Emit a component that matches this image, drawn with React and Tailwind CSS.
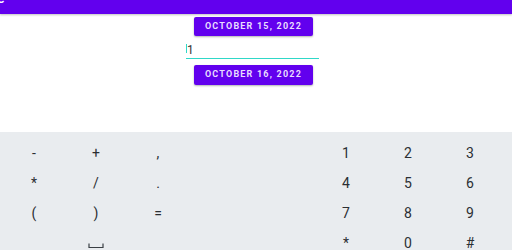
import React from "react";

const left = [["-", "+", ","], ["*", "/", "."], ["(", ")", "="], ["", "space", ""]];
const right = [["1", "2", "3"], ["4", "5", "6"], ["7", "8", "9"], ["*", "0", "#"]];

function Key({ k }) {
  if (k === "space") {
    return (
      <div className="flex h-[30px] w-[62px] items-center justify-center">
        <svg width="16" height="6" viewBox="0 0 16 6" className="mt-[6px]">
          <path d="M1 0.5 V4.5 H15 V0.5" fill="none" stroke="#3a3f44" strokeWidth="1.2" />
        </svg>
      </div>
    );
  }
  return (
    <div className="flex h-[30px] w-[62px] items-center justify-center text-[14px] text-[#2b2f33]">
      {k}
    </div>
  );
}

export default function App() {
  return (
    <div className="flex h-[250px] w-[512px] flex-col overflow-hidden bg-white" style={{ fontFamily: "Roboto, 'Noto Sans', sans-serif" }}>
      <div className="relative h-[14px] shrink-0 overflow-hidden bg-[#6200ee] shadow-[0_1px_2px_rgba(0,0,0,0.25)]">
        <span className="absolute left-[-3px] top-[-12px] text-[14px] font-medium text-white">e</span>
      </div>
      <div className="flex h-[118px] shrink-0 flex-col items-start">
        <button className="ml-[194px] mt-[3px] flex h-[19px] w-[119px] items-center justify-center rounded-[2px] bg-[#6200ee] text-[9px] font-bold tracking-[1.2px] text-[#e9dcff] shadow-[0_1px_2px_rgba(0,0,0,0.3)]">
          OCTOBER 15, 2022
        </button>
        <div className="ml-[186px] mt-[8px] flex h-[15px] w-[133px] items-end border-b border-[#2fd8c8]">
          <div className="mb-[5px] h-[9px] w-[1px] bg-[#2fd8c8]" />
          <span className="mb-[1px] text-[12px] leading-[14px] text-[#333]">1</span>
        </div>
        <button className="ml-[194px] mt-[6px] flex h-[20px] w-[119px] items-center justify-center rounded-[2px] bg-[#6200ee] text-[9px] font-bold tracking-[1.2px] text-[#e9dcff] shadow-[0_1px_2px_rgba(0,0,0,0.3)]">
          OCTOBER 16, 2022
        </button>
      </div>
      <div className="flex flex-1 bg-[#e9ecef] pl-[3px] pt-[6px]">
        <div className="flex flex-col">
          {left.map((row, i) => (
            <div key={i} className="flex">
              {row.map((k, j) => (
                <Key key={j} k={k} />
              ))}
            </div>
          ))}
        </div>
        <div className="ml-[126px] flex flex-col">
          {right.map((row, i) => (
            <div key={i} className="flex">
              {row.map((k, j) => (
                <Key key={j} k={k} />
              ))}
            </div>
          ))}
        </div>
      </div>
    </div>
  );
}
